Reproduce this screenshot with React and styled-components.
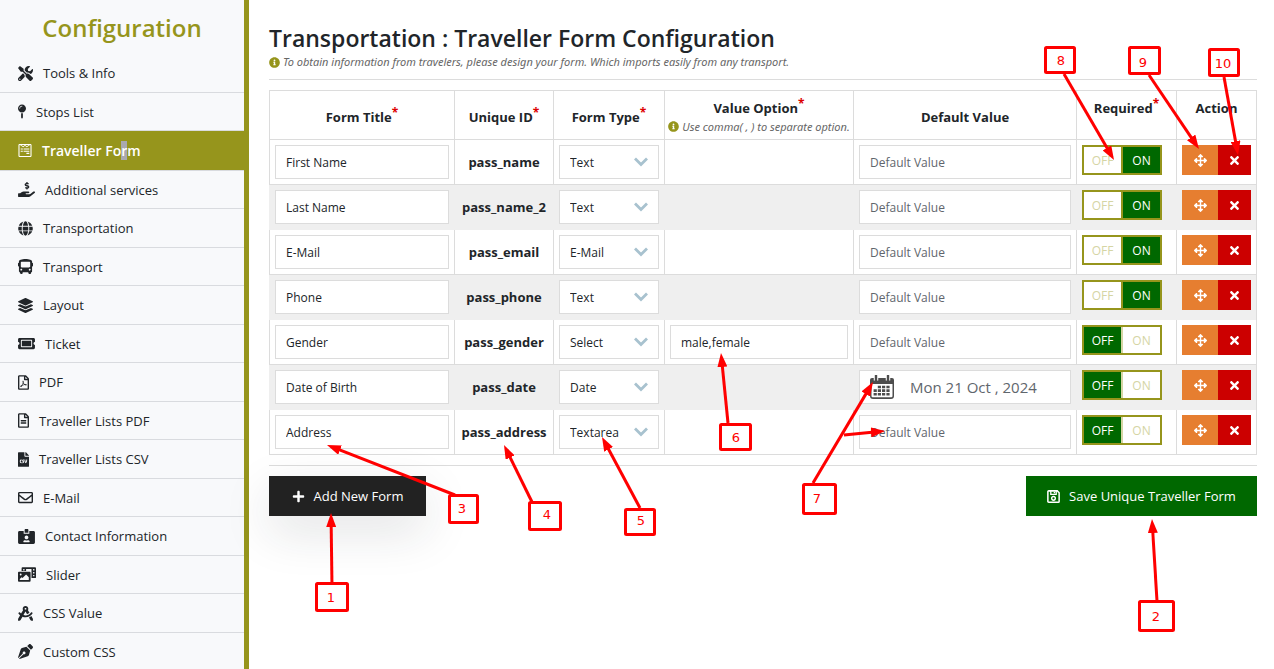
import React from 'react';
import styled, { createGlobalStyle, css } from 'styled-components';
import {
  FaTools, FaMapPin, FaWpforms, FaHandHoldingUsd, FaGlobe, FaBus, FaLayerGroup, FaTicketAlt,
  FaRegFilePdf, FaRegFileAlt, FaFileCsv, FaRegEnvelope, FaIdCardAlt, FaPhotoVideo,
  FaDraftingCompass, FaPenNib, FaInfoCircle, FaPlus, FaArrowsAlt, FaTimes,
} from 'react-icons/fa';

const olive = '#96951c';
const green = '#006800';
const line = '#dcdcdc';

const Global = createGlobalStyle`
  *, *::before, *::after { box-sizing: border-box; }
  body {
    margin: 0;
    background: #fff;
    color: #212529;
    font-family: "Open Sans", "Noto Sans", sans-serif;
    font-size: 13px;
  }
  button, input, select { font: inherit; color: inherit; margin: 0; }
`;

const Page = styled.div`
  position: relative;
  display: flex;
  min-height: 100vh;
  overflow: hidden;
`;

const Sidebar = styled.nav`
  flex: 0 0 249px;
  height: 100vh;
  overflow: hidden;
  background: #f8f9fb;
  border-right: 5px solid ${olive};
`;

const SideTitle = styled.h2`
  margin: 0;
  padding-top: 2px;
  height: 54px;
  line-height: 52px;
  text-align: center;
  font-size: 24px;
  font-weight: 600;
  color: ${olive};
`;

const Menu = styled.ul`
  margin: 0;
  padding: 0;
  list-style: none;
`;

const MenuItem = styled.li`
  height: 39px;
  border-bottom: 1px solid #d9dbdf;
  &:nth-child(even) { height: 38px; }
  ${(p) => p.$active && css`
    height: 40px;
    background: ${olive};
    color: #fff;
    font-size: 14px;
    font-weight: 600;
  `}
`;

const MenuLink = styled.a`
  display: flex;
  align-items: center;
  gap: 10px;
  height: 100%;
  padding-left: 18px;
  color: inherit;
  text-decoration: none;
  white-space: nowrap;
  svg { width: ${(p) => p.$icon}px; height: 15px; flex: none; }
`;

const Selected = styled.span`
  background: #a9a9b0;
`;

const Main = styled.main`
  flex: 1;
  min-width: 0;
  padding: 23px 17px 0 20px;
`;

const Title = styled.h1`
  margin: 0;
  font-size: 23px;
  line-height: 30px;
  font-weight: 600;
`;

const Hint = styled.p`
  display: flex;
  align-items: center;
  justify-content: ${(p) => (p.$center ? 'center' : 'flex-start')};
  gap: 3px;
  margin: 0;
  font-family: "Noto Sans", "Open Sans", sans-serif;
  font-size: 11px;
  line-height: 18px;
  font-style: italic;
  font-weight: 400;
  color: #666;
  white-space: nowrap;
  svg { color: ${olive}; font-size: 11px; flex: none; }
`;

const Rule = styled.hr`
  margin: ${(p) => p.$top}px 0 10px;
  border: 0;
  border-top: 1px solid ${line};
`;

const Table = styled.table`
  width: 100%;
  table-layout: fixed;
  border-spacing: 0;
  border-top: 1px solid ${line};
  border-right: 1px solid ${line};
`;

const Col = styled.col`
  width: ${(p) => p.$w};
`;

const Th = styled.th`
  height: 49px;
  padding: ${(p) => (p.$top ? '7px 0 0' : '3px 0 0')};
  vertical-align: ${(p) => (p.$top ? 'top' : 'middle')};
  border-left: 1px solid ${line};
  border-bottom: 1px solid ${line};
  line-height: 20px;
  font-weight: 700;
`;

const Star = styled.sup`
  color: #d00;
  font-size: 12px;
  line-height: 0;
`;

const Td = styled.td`
  height: 45px;
  padding: 5px;
  vertical-align: top;
  border-left: 1px solid ${line};
  border-bottom: 1px solid ${line};
`;

const Row = styled.tr`
  &:nth-child(even) ${Td} {
    background: #efefef;
    border-left-color: #efefef;
    border-bottom-color: #efefef;
  }
`;

const UniqueId = styled.strong`
  display: block;
  line-height: 34px;
  text-align: center;
  white-space: nowrap;
`;

const field = css`
  display: block;
  width: 100%;
  height: 34px;
  padding: 0 10px;
  border: 1px solid ${line};
  border-radius: 0;
  background: #fff;
  outline: 0;
`;

const Input = styled.input`
  ${field}
  font-size: 12px;
  &::placeholder { color: #5f666d; opacity: 1; }
`;

const DateField = styled.label`
  ${field}
  display: flex;
  align-items: center;
  gap: 16px;
  svg { flex: none; }
`;

const DateInput = styled.input`
  flex: 1;
  min-width: 0;
  padding: 0;
  border: 0;
  outline: 0;
  background: none;
  font-size: 15px;
  color: #5f666d;
`;

const SelectWrap = styled.div`
  display: grid;
  align-items: center;
  > * { grid-area: 1 / 1; }
  svg { justify-self: end; margin-right: 11px; pointer-events: none; }
`;

const Select = styled.select`
  ${field}
  appearance: none;
  font-size: 12px;
`;

const Toggle = styled.div`
  display: flex;
  width: 80px;
  height: 30px;
  border: 2px solid ${olive};
`;

const ToggleButton = styled.button`
  flex: 1 1 0;
  padding: 0;
  border: 0;
  border-left: ${(p) => (p.$divider ? `2px solid ${p.$divider}` : '0')};
  background: ${(p) => (p.$on ? green : '#fff')};
  color: ${(p) => (p.$on ? '#fff' : '#d5d5a4')};
  font-size: 12px;
`;

const Actions = styled.div`
  display: flex;
`;

const IconButton = styled.button`
  display: flex;
  align-items: center;
  justify-content: center;
  width: ${(p) => p.$w}px;
  height: 30px;
  padding: 0;
  border: 0;
  background: ${(p) => p.$bg};
  color: #fff;
`;

const Footer = styled.div`
  display: flex;
  justify-content: space-between;
`;

const BigButton = styled.button`
  display: flex;
  align-items: center;
  justify-content: center;
  gap: 9px;
  width: ${(p) => p.$w}px;
  height: 40px;
  padding: 0;
  border: 0;
  background: ${(p) => p.$bg};
  box-shadow: ${(p) => (p.$raised ? '0 16px 48px rgba(30, 35, 50, 0.13)' : 'none')};
  color: #fff;
  font-weight: 500;
  white-space: nowrap;
`;

const Overlay = styled.svg`
  position: absolute;
  top: 0;
  left: 0;
  width: 1274px;
  height: 669px;
  pointer-events: none;
  text { font-family: "DejaVu Sans", sans-serif; font-size: 13px; fill: #f00; text-anchor: middle; }
`;

// Label, icon, and the icon's width at the menu's icon height.
const menu = [
  ['Tools & Info', FaTools, 15],
  ['Stops List', FaMapPin, 8],
  ['Traveller Form', FaWpforms, 14],
  ['Additional services', FaHandHoldingUsd, 17],
  ['Transportation', FaGlobe, 15],
  ['Transport', FaBus, 15],
  ['Layout', FaLayerGroup, 15],
  ['Ticket', FaTicketAlt, 17],
  ['PDF', FaRegFilePdf, 11],
  ['Traveller Lists PDF', FaRegFileAlt, 11],
  ['Traveller Lists CSV', FaFileCsv, 11],
  ['E-Mail', FaRegEnvelope, 15],
  ['Contact Information', FaIdCardAlt, 17],
  ['Slider', FaPhotoVideo, 18],
  ['CSS Value', FaDraftingCompass, 15],
  ['Custom CSS', FaPenNib, 15],
];

const rows = [
  { title: 'First Name', id: 'pass_name', type: 'Text', required: true },
  { title: 'Last Name', id: 'pass_name_2', type: 'Text', required: true },
  { title: 'E-Mail', id: 'pass_email', type: 'E-Mail', required: true },
  { title: 'Phone', id: 'pass_phone', type: 'Text', required: true },
  { title: 'Gender', id: 'pass_gender', type: 'Select', option: 'male,female', required: false },
  { title: 'Date of Birth', id: 'pass_date', type: 'Date', date: 'Mon 21 Oct , 2024', required: false },
  { title: 'Address', id: 'pass_address', type: 'Textarea', required: false },
];

const types = ['Text', 'E-Mail', 'Select', 'Date', 'Textarea'];

// Callouts: box corner and size, label centre, then the arrows as from/to pairs.
const callouts = [
  { n: 1, box: [315, 582, 34, 30], at: [331, 597], arrows: [[332, 586, 331, 513]] },
  { n: 2, box: [1138, 600, 37, 32], at: [1156, 616], arrows: [[1157, 601, 1152, 519]] },
  { n: 3, box: [448, 494, 31, 30], at: [462, 508], arrows: [[455, 495, 327, 445]] },
  { n: 4, box: [528, 501, 34, 30], at: [547, 514], arrows: [[532, 502, 504, 445]] },
  { n: 5, box: [624, 508, 32, 28], at: [641, 520], arrows: [[640, 508, 602, 437]] },
  { n: 6, box: [719, 423, 33, 28], at: [736, 437], arrows: [[728, 423, 721, 353]] },
  { n: 7, box: [802, 483, 35, 32], at: [817, 498], arrows: [[813, 483, 873, 382], [844, 435, 885, 431]] },
  { n: 8, box: [1044, 46, 32, 28], at: [1061, 60], arrows: [[1064, 74, 1114, 160]] },
  { n: 9, box: [1128, 46, 33, 29], at: [1143, 62], arrows: [[1149, 75, 1199, 149]] },
  { n: 10, box: [1208, 48, 32, 29], at: [1223, 63], arrows: [[1224, 77, 1238, 155]] },
];

const Chevron = () => (
  <svg width="14" height="10" viewBox="0 0 14 10" aria-hidden="true">
    <path d="M1 1.500 7 7.500 13 1.500" fill="none" stroke="#a8c2cf" strokeWidth="2.800" />
  </svg>
);

const Calendar = () => (
  <svg width="24" height="24" viewBox="0 0 24 24" aria-hidden="true">
    <path d="M2 3h20a2 2 0 0 1 2 2v16a3 3 0 0 1-3 3H3a3 3 0 0 1-3-3V5a2 2 0 0 1 2-2z" fill="#4d4d4d" />
    <path d="M1.500 9h21v12a1.200 1.200 0 0 1-1.200 1.200H2.700a1.200 1.200 0 0 1-1.200-1.200z" fill="#fff" />
    <path d="M6 0v5.500M18 0v5.500" stroke="#fff" strokeWidth="4.500" />
    <path d="M6 .5v4.500M18 .5v4.500" stroke="#4d4d4d" strokeWidth="2.400" strokeLinecap="round" />
    <path
      d="M7.800 10.800h3.200v2.500H7.800zM12 10.800h3.200v2.500H12zM16.400 10.800h3.200v2.500h-3.200zM3.600 14.300h3.200v2.600H3.600zM7.800 14.300h3.200v2.600H7.800zM12 14.300h3.200v2.600H12zM16.400 14.300h3.200v2.600h-3.200zM3.600 18h3.200v2.600H3.600zM7.800 18h3.200v2.600H7.800zM12 18h3.200v2.600H12zM16.400 18h3.200v2.600h-3.200z"
      fill="#4d4d4d"
    />
  </svg>
);

const SaveIcon = () => (
  <svg width="13" height="13" viewBox="0 0 12 12" aria-hidden="true" fill="none" stroke="#fff">
    <path d="M1.700.8H9.500L11.200 2.500V10.500A.8.8 0 0 1 10.400 11.300H1.600A.8.8 0 0 1 .8 10.500V1.600A.8.8 0 0 1 1.700.8Z" strokeWidth="1.400" />
    <path d="M3.500 1V4H8.500V1M6.800 1.500V3" strokeWidth="1.200" />
    <circle cx="6" cy="7.700" r="1.700" strokeWidth="1.300" />
  </svg>
);

const Heading = ({ children, top }) => <Th scope="col" $top={top}>{children}</Th>;

export default function App() {
  return (
    <>
      <Global />
      <Page>
        <Sidebar aria-label="Configuration">
          <SideTitle>Configuration</SideTitle>
          <Menu>
            {menu.map(([label, Icon, width]) => {
              const active = label === 'Traveller Form';
              return (
                <MenuItem key={label} $active={active}>
                  <MenuLink href="#" $icon={width} aria-current={active ? 'page' : undefined}>
                    <Icon aria-hidden="true" />
                    {active ? <span>Traveller Fo<Selected>r</Selected>m</span> : label}
                  </MenuLink>
                </MenuItem>
              );
            })}
          </Menu>
        </Sidebar>

        <Main>
          <Title>Transportation : Traveller Form Configuration</Title>
          <Hint>
            <FaInfoCircle aria-hidden="true" />
            To obtain information from travelers, please design your form. Which imports easily from any transport.
          </Hint>
          <Rule $top={8} />

          <Table>
            <colgroup>
              <Col $w="185px" />
              <Col $w="99px" />
              <Col $w="111px" />
              <Col $w="189px" />
              <Col $w="auto" />
              <Col $w="100px" />
              <Col $w="80px" />
            </colgroup>
            <thead>
              <tr>
                <Heading>Form Title<Star>*</Star></Heading>
                <Heading>Unique ID<Star>*</Star></Heading>
                <Heading>Form Type<Star>*</Star></Heading>
                <Heading>
                  Value Option<Star>*</Star>
                  <Hint $center><FaInfoCircle aria-hidden="true" />Use comma( , ) to separate option.</Hint>
                </Heading>
                <Heading>Default Value</Heading>
                <Heading top>Required<Star>*</Star></Heading>
                <Heading top>Action</Heading>
              </tr>
            </thead>
            <tbody>
              {rows.map((r) => (
                <Row key={r.id}>
                  <Td><Input aria-label="Form title" defaultValue={r.title} /></Td>
                  <Td><UniqueId>{r.id}</UniqueId></Td>
                  <Td>
                    <SelectWrap>
                      <Select aria-label="Form type" defaultValue={r.type}>
                        {types.map((t) => <option key={t}>{t}</option>)}
                      </Select>
                      <Chevron />
                    </SelectWrap>
                  </Td>
                  <Td>{r.option && <Input aria-label="Value option" defaultValue={r.option} />}</Td>
                  <Td>
                    {r.date ? (
                      <DateField>
                        <Calendar />
                        <DateInput aria-label="Default date" defaultValue={r.date} />
                      </DateField>
                    ) : (
                      <Input aria-label="Default value" placeholder="Default Value" />
                    )}
                  </Td>
                  <Td>
                    <Toggle role="group" aria-label="Required">
                      <ToggleButton type="button" $on={!r.required} aria-pressed={!r.required}>OFF</ToggleButton>
                      <ToggleButton
                        type="button"
                        $on={r.required}
                        $divider={r.required ? olive : '#d5d5a4'}
                        aria-pressed={r.required}
                      >
                        ON
                      </ToggleButton>
                    </Toggle>
                  </Td>
                  <Td>
                    <Actions>
                      <IconButton type="button" aria-label="Move" $w={36} $bg="#e67e30"><FaArrowsAlt /></IconButton>
                      <IconButton type="button" aria-label="Delete" $w={33} $bg="#cc0000"><FaTimes /></IconButton>
                    </Actions>
                  </Td>
                </Row>
              ))}
            </tbody>
          </Table>

          <Rule $top={10} />
          <Footer>
            <BigButton type="button" $w={157} $bg="#222" $raised><FaPlus aria-hidden="true" />Add New Form</BigButton>
            <BigButton type="button" $w={231} $bg={green}><SaveIcon />Save Unique Traveller Form</BigButton>
          </Footer>
        </Main>

        <Overlay viewBox="0 0 1274 669">
          <defs>
            <marker id="head" markerUnits="userSpaceOnUse" markerWidth="14" markerHeight="10" refX="14" refY="5" orient="auto">
              <path d="M0 0 14 5 0 10z" fill="#f00" />
            </marker>
          </defs>
          {callouts.map(({ n, box: [x, y, w, h], at, arrows }) => (
            <g key={n}>
              {arrows.map(([x1, y1, x2, y2]) => {
                const k = 1 - 8 / Math.hypot(x2 - x1, y2 - y1);
                return (
                  <g key={x2}>
                    <line x1={x1} y1={y1} x2={x1 + (x2 - x1) * k} y2={y1 + (y2 - y1) * k} stroke="#f00" strokeWidth="3" />
                    <line x1={x1} y1={y1} x2={x2} y2={y2} stroke="none" markerEnd="url(#head)" />
                  </g>
                );
              })}
              <rect x={x + 1.5} y={y + 1.5} width={w - 3} height={h - 3} rx="1" fill="#fff" stroke="#f00" strokeWidth="3" />
              <text x={at[0]} y={at[1] + 5}>{n}</text>
            </g>
          ))}
        </Overlay>
      </Page>
    </>
  );
}
